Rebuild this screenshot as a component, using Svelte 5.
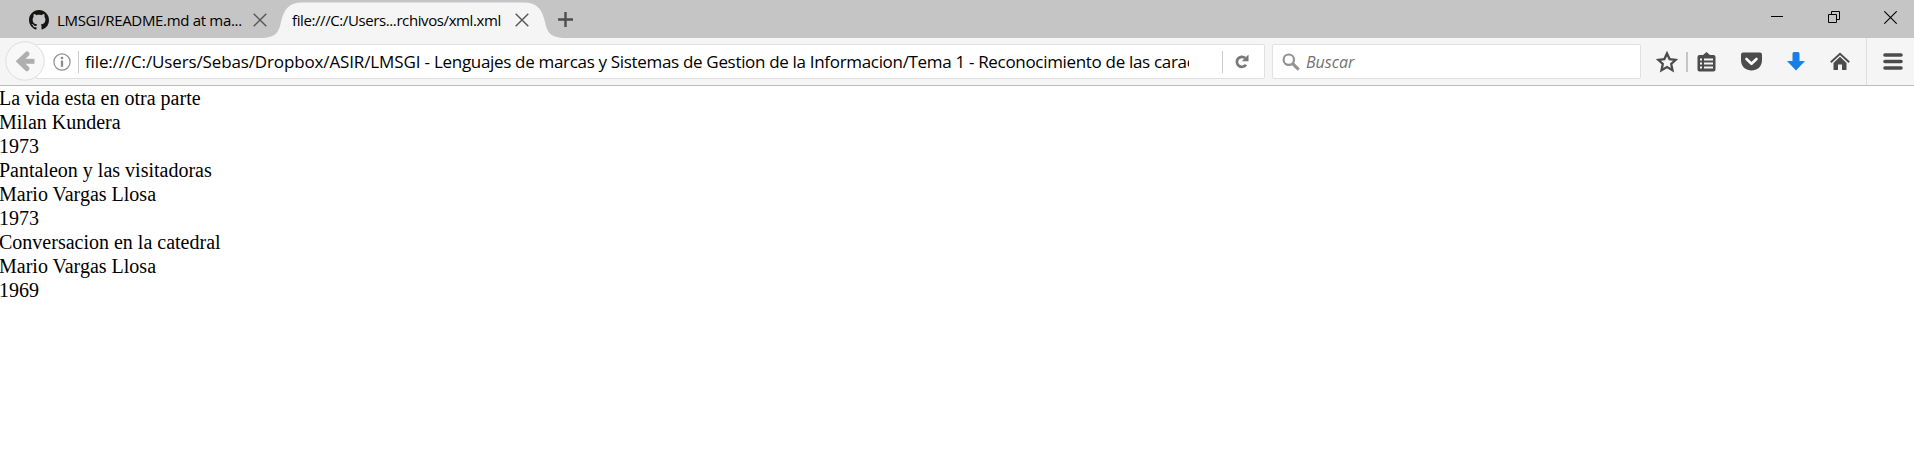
<script>
  const path = 'file:///C:/Users/Sebas/Dropbox/ASIR/LMSGI -';
  const rest = ' Lenguajes de marcas y Sistemas de Gestion de la Informacion/Tema 1 - Reconocimiento de las caracteristicas';
  const books = [
    ['La vida esta en otra parte', 'Milan Kundera', '1973'],
    ['Pantaleon y las visitadoras', 'Mario Vargas Llosa', '1973'],
    ['Conversacion en la catedral', 'Mario Vargas Llosa', '1969']
  ];
</script>

{#snippet cross()}
  <svg class="cross" width="14" height="14" viewBox="0 0 14 14"><path d="M.7.7l12.6 12.6M13.3.7L.7 13.3" fill="none" stroke="#555" stroke-width="1.4" /></svg>
{/snippet}

<div class="window">
  <header class="tabs">
    <div class="tab first">
      <svg width="20" height="20" viewBox="0 0 16 16"><path fill="#161514" d="M8 0C3.58 0 0 3.58 0 8c0 3.54 2.29 6.53 5.47 7.59.4.07.55-.17.55-.38 0-.19-.01-.82-.01-1.49-2.01.37-2.53-.49-2.69-.94-.09-.23-.48-.94-.82-1.13-.28-.15-.68-.52-.01-.53.63-.01 1.08.58 1.23.82.72 1.21 1.87.87 2.33.66.07-.52.28-.87.51-1.07-1.78-.2-3.64-.89-3.64-3.95 0-.87.31-1.59.82-2.15-.08-.2-.36-1.02.08-2.12 0 0 .67-.21 2.2.82.64-.18 1.32-.27 2-.27s1.36.09 2 .27c1.53-1.04 2.2-.82 2.2-.82.44 1.1.16 1.92.08 2.12.51.56.82 1.27.82 2.15 0 3.07-1.87 3.75-3.65 3.95.29.25.54.73.54 1.48 0 1.07-.01 1.93-.01 2.2 0 .21.15.46.55.38A8.01 8.01 0 0 0 16 8c0-4.42-3.58-8-8-8z" /></svg>
      <span class="label one">LMSGI/README.md at ma...</span>
      {@render cross()}
    </div>
    <div class="tab active">
      <svg class="shape" width="300" height="38" viewBox="0 0 300 38"><path fill="#f5f5f5" d="M0 38C13 37 16 32 18 22C21 9 26 2.5 39 2.5H261C274 2.5 279 9 282 22C284 32 287 37 300 38Z" /></svg>
      <span class="label two">file:///C:/Users...rchivos/xml.xml</span>
      {@render cross()}
    </div>
    <svg class="plus" width="15" height="15" viewBox="0 0 15 15"><path d="M7.5 0v15M0 7.5h15" stroke="#4d4d4d" stroke-width="2.4" /></svg>
    <div class="controls">
      <svg width="13" height="13" viewBox="0 0 13 13"><path d="M0 5.5h12" stroke="#000" /></svg>
      <svg width="13" height="13" viewBox="0 0 13 13"><path d="M.5 3.5h8v8h-8zM3.5 3.5v-3h8v8h-3" fill="none" stroke="#000" /></svg>
      <svg width="13" height="13" viewBox="0 0 13 13"><path d="M.3.3l12.4 12.4M12.7.3L.3 12.7" stroke="#000" stroke-width="1.1" /></svg>
    </div>
  </header>

  <nav>
    <div class="back">
      <svg width="40" height="40" viewBox="0 0 40 40"><circle cx="20" cy="20" r="19.2" fill="#f8f8f8" stroke="#dedede" /><path d="M29.500 20.300H15" stroke="#afafaf" stroke-width="5" /><path d="M22 13l-7.700 7.300 7.700 7.300" fill="none" stroke="#afafaf" stroke-width="5" stroke-linecap="round" /></svg>
    </div>
    <div class="address">
      <svg class="info" width="18" height="18" viewBox="0 0 18 18"><circle cx="9" cy="9" r="8.1" fill="none" stroke="#909090" stroke-width="1.2" /><circle cx="9" cy="5" r="1.35" fill="#8c8c8c" /><path d="M9 7.6v6.2" stroke="#8c8c8c" stroke-width="2.3" /></svg>
      <i class="rule"></i>
      <div class="url"><span class="path">{path}</span><span>{rest}</span></div>
      <i class="rule reload-rule"></i>
      <svg class="reload" width="14" height="15" viewBox="0 0 14 15"><path d="M10.2 4.1A5 5 0 1 0 11 10.7" fill="none" stroke="#777" stroke-width="2.7" /><path d="M13.5.4v6.8H6.8z" fill="#777" /></svg>
    </div>
    <div class="search">
      <svg width="18" height="18" viewBox="0 0 18 18"><circle cx="6.8" cy="6.7" r="5.2" fill="none" stroke="#929292" stroke-width="2.2" /><path d="M10.7 10.6l6 6" stroke="#929292" stroke-width="3" /></svg>
      <span>Buscar</span>
    </div>
    <div class="tools">
      <svg class="star" width="22" height="22" viewBox="0 0 22 22"><path d="M11 2.4l2.6 5.7 6.2.7-4.6 4.2 1.3 6.3L11 16.1l-5.5 3.2L6.8 13 2.2 8.800l6.200-.7z" fill="none" stroke="#4c4c4c" stroke-width="2.300" /></svg>
      <i class="divider"></i>
      <svg class="list" width="19" height="20" viewBox="0 0 19 20"><path fill="#4c4c4c" d="M6 3l3.5-3L13 3h3.5Q18.5 3 18.5 5v12.500q0 2-2 2h-14q-2 0-2-2V5q0-2 2-2z" /><path d="M3 7.500h2M7 7.500h9M3 11.500h2M7 11.500h9M3 15.500h2M7 15.500h9" stroke="#f5f5f5" stroke-width="2" /></svg>
      <svg class="pocket" width="21" height="19" viewBox="0 0 21 19"><path d="M2 .5h17q2 0 2 2V8c0 14-21 14-21 0V2.500q0-2 2-2z" fill="#4c4c4c" /><path d="M5.500 7l5 4.800 5-4.800" fill="none" stroke="#fff" stroke-width="2.600" stroke-linecap="round" stroke-linejoin="round" /></svg>
      <svg class="download" width="18" height="19" viewBox="0 0 18 19"><path d="M5.500 1.500q0-1.500 1.500-1.500h4q1.500 0 1.500 1.500V9H18l-9 9.500L0 9h5.500z" fill="#177fe5" /></svg>
      <svg class="home" width="20" height="19" viewBox="0 0 20 19"><path d="M.8 10.300L10 1.700l9.200 8.600" fill="none" stroke="#4c4c4c" stroke-width="1.900" /><path d="M10 4.800l6.500 6.100V18H12v-5.500H8V18H3.500v-7.100z" fill="#4c4c4c" /></svg>
      <i class="edge"></i>
      <svg width="20" height="18" viewBox="0 0 20 18"><path d="M2 2h16M2 8.500h16M2 15h16" stroke="#4c4c4c" stroke-width="3.600" stroke-linecap="round" /></svg>
    </div>
  </nav>

  <main>
    {#each books as book}
      {#each book as line}<div>{line}</div>{/each}
    {/each}
  </main>
</div>

<style>
  :global(body) { margin: 0; background: #fff; overflow: hidden; }
  .window { width: 1914px; height: 452px; overflow: hidden; background: #fff; font-family: "Open Sans", "Noto Sans", sans-serif; color: #000; }
  svg { display: block; flex: none; }
  .tabs { height: 38px; display: flex; background: #c5c5c5; }
  .tab { position: relative; display: flex; align-items: center; height: 38px; box-sizing: border-box; }
  .first { width: 264px; padding: 2px 0 0 29px; }
  .active { width: 294px; padding: 2px 0 0 28px; }
  .shape { position: absolute; left: -1px; top: 0; }
  .label { position: relative; white-space: nowrap; font-size: 15px; line-height: 20px; flex: none; }
  .one { width: 186px; margin-left: 8px; letter-spacing: -.32px; }
  .two { width: 223px; letter-spacing: -.4px; }
  .cross { position: relative; margin-left: 10px; }
  .two + .cross { margin-left: 0; }
  .plus { margin-top: 12px; }
  .controls { display: flex; gap: 43.5px; margin: 11px 17px 0 auto; }
  nav { height: 48px; box-sizing: border-box; border-bottom: 1px solid #bcbcbc; background: #f5f5f5; display: flex; align-items: flex-start; }
  .back { width: 40px; margin: 3px 0 0 5px; position: relative; z-index: 1; }
  .address, .search { height: 35px; box-sizing: border-box; border: 1px solid #e1e1e1; background: #fff; margin-top: 6px; display: flex; align-items: center; }
  .address { width: 1229px; margin-left: -9px; padding-left: 16px; border-radius: 0 2px 2px 0; }
  .rule { width: 1px; height: 22px; background: #cacaca; margin-left: 7px; }
  .url { width: 1104px; margin-left: 6px; overflow: hidden; white-space: nowrap; font-size: 17px; line-height: 28px; letter-spacing: -.32px; }
  .path { letter-spacing: -.13px; }
  .reload-rule { margin-left: 33px; }
  .reload { margin-left: 12px; }
  .search { width: 369px; margin-left: 7px; padding-left: 9px; gap: 6px; font-size: 16px; font-style: italic; color: #737373; border-radius: 2px; }
  .tools { height: 47px; display: flex; align-items: center; }
  .star { margin-left: 15px; }
  .divider { width: 2px; height: 20px; background: #c5c5c5; margin-left: 8px; }
  .list { margin-left: 9px; }
  .pocket { margin-left: 25px; }
  .download { margin-left: 25px; }
  .home { margin-left: 25px; }
  .edge { width: 1px; height: 47px; background: #dedede; margin: 0 16px; }
  main { font: 20px/24px "Liberation Serif", serif; margin-left: -1px; }
</style>
